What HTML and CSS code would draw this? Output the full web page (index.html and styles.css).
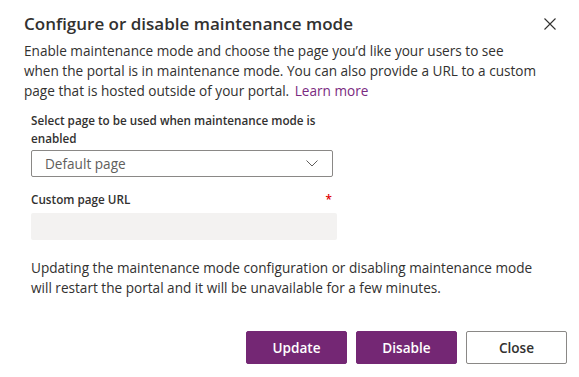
FILE: index.html
```html
<!DOCTYPE html>
<html lang="en">
<head>
    <meta charset="utf-8">
    <title>Configure or disable maintenance mode</title>
    <link rel="stylesheet" href="styles.css">
</head>
<body>
    <div class="dialog">
        <div class="dialog-header">
            <h1>Configure or disable maintenance mode</h1>
            <button class="close-btn" aria-label="Close">
                <svg width="12" height="12" viewBox="0 0 12 12">
                    <path d="M0.5 0.5 L11.5 11.5 M11.5 0.5 L0.5 11.5" stroke="#323130" stroke-width="1.1" fill="none"/>
                </svg>
            </button>
        </div>
        <p class="intro">Enable maintenance mode and choose the page you’d like your users to see<br>
            when the portal is in maintenance mode. You can also provide a URL to a custom<br>
            page that is hosted outside of your portal. <a href="#">Learn more</a></p>

        <div class="form">
            <div class="field-label">Select page to be used when maintenance mode is enabled</div>
            <div class="dropdown">
                <span>Default page</span>
                <svg width="12" height="7" viewBox="0 0 12 7">
                    <path d="M0.5 0.5 L6 6 L11.5 0.5" stroke="#605e5c" stroke-width="1" fill="none"/>
                </svg>
            </div>
            <div class="field-label url-label">
                <span>Custom page URL</span>
                <span class="required">*</span>
            </div>
            <div class="text-input"></div>
        </div>

        <p class="note">Updating the maintenance mode configuration or disabling maintenance mode will restart the portal and it will be unavailable for a few minutes.</p>

        <div class="actions">
            <button class="btn primary">Update</button>
            <button class="btn primary">Disable</button>
            <button class="btn">Close</button>
        </div>
    </div>
</body>
</html>
```

FILE: styles.css
```css
body {
    font-family: "Segoe UI", "Open Sans", sans-serif;
    margin: 0;
    padding: 0;
    background-color: #fff;
    color: #323130;
}
.dialog {
    width: 579px;
    height: 377px;
    box-sizing: border-box;
    padding: 12px 12px 0 24px;
}
.dialog-header {
    display: flex;
    justify-content: space-between;
    align-items: center;
}
.dialog-header h1 {
    margin: 0;
    font-size: 17px;
    font-weight: 600;
    line-height: 24px;
}
.close-btn {
    background: none;
    border: none;
    padding: 0;
    margin-right: 11px;
    width: 12px;
    height: 12px;
    display: flex;
}
.intro {
    margin: 5px 0 0;
    font-size: 13.6px;
    line-height: 20px;
}
.intro a {
    color: #7a2a80;
    text-decoration: none;
    margin-left: 2px;
}
.form {
    margin: 10px 0 0 7px;
    width: 306px;
}
.field-label {
    font-size: 11.7px;
    font-weight: 600;
    line-height: 18px;
}
.dropdown {
    margin-top: 3px;
    width: 302px;
    height: 27px;
    box-sizing: border-box;
    border: 1px solid #8a8886;
    border-radius: 2px;
    display: flex;
    justify-content: space-between;
    align-items: center;
    padding: 0 14px 0 13px;
    font-size: 13.6px;
    color: #605e5c;
}
.url-label {
    margin-top: 13px;
    display: flex;
    justify-content: space-between;
    padding-right: 5px;
}
.required {
    color: #e00000;
}
.text-input {
    margin-top: 5px;
    height: 27px;
    background-color: #f3f2f1;
    border-radius: 2px;
}
.note {
    margin: 18px 0 0 7px;
    font-size: 13.6px;
    line-height: 20px;
    max-width: 510px;
}
.actions {
    margin-top: 33px;
    display: flex;
    justify-content: flex-end;
    gap: 9px;
}
.btn {
    width: 101px;
    height: 33px;
    font-family: inherit;
    font-size: 13.6px;
    font-weight: 600;
    border: 1px solid #8a8886;
    border-radius: 2px;
    background-color: #fff;
    color: #323130;
    cursor: pointer;
}
.btn.primary {
    background-color: #742774;
    border-color: #742774;
    color: #fff;
}
```
